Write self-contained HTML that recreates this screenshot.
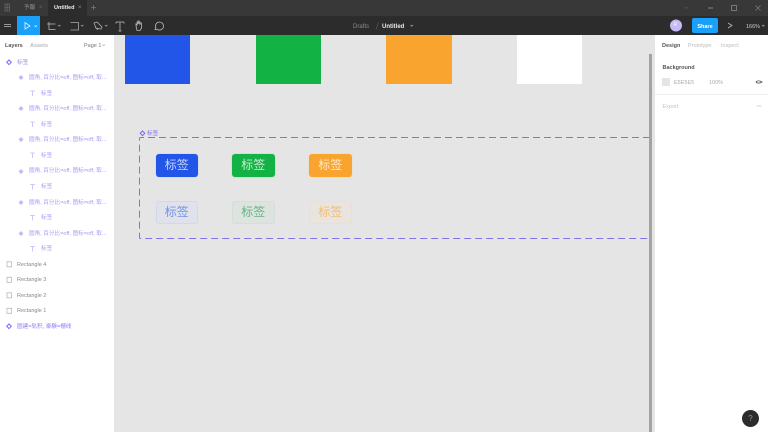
<!DOCTYPE html>
<html><head><meta charset="utf-8"><style>
html,body{margin:0;padding:0}
body{width:768px;height:432px;overflow:hidden;position:relative;background:#e5e5e5;font-family:"Liberation Sans","Noto Sans CJK SC",sans-serif}
#w{position:absolute;left:0;top:0;width:768px;height:432px;overflow:hidden;filter:blur(.3px)}
.a{position:absolute;white-space:nowrap}
.t{font-size:5.5px;line-height:8px}
.l{font-size:5.6px;line-height:8px;color:#a99cf5}
.tag{position:absolute;width:42.500px;height:23px;border-radius:3px;font-size:12px;line-height:23px;text-align:center;box-sizing:border-box}
svg{position:absolute;overflow:visible}
</style></head><body><div id="w">
<div class="a" style="left:0;top:0;width:768px;height:16px;background:#383838"></div>
<div class="a" style="left:48px;top:0;width:39px;height:16px;background:#2c2c2c"></div>
<div class="a" style="left:0;top:16px;width:768px;height:19px;background:#2c2c2c"></div>
<svg style="left:0;top:0" width="768" height="35" fill="none" stroke-width=".8">
<g stroke="#666"><rect x="5" y="4" width="4.500" height="7"/><path d="M7.200 4v7M5 7.500h4.500"/></g>
<path d="M39.500 5.500l2.500 2.500M42 5.500l-2.500 2.500" stroke="#555"/><path d="M78.500 5.500l2.500 2.500M81 5.500l-2.500 2.500" stroke="#666"/><path d="M91 7.500h5M93.500 5v5" stroke="#777"/>
<path d="M4 24.500h7M4 26.500h7" stroke="#bbb"/>
<rect x="17" y="16" width="23" height="19" fill="#18a0fb"/>
<path d="M25 22.500v6.500l5-3z" stroke="#e8f5ff"/><path d="M34.500 25.500l1.200 1.200 1.200-1.200" stroke="#e8f5ff"/>
<path d="M47 24h8.500M49 22v7.500h6.500" stroke="#bbb"/><path d="M58 25l1.200 1.200L60.500 25" stroke="#999"/>
<path d="M70.500 22.500h8v7.500h-8" stroke="#aaa"/><path d="M81 25l1.200 1.200L83.500 25" stroke="#999"/>
<path d="M94 23l3-1 5 5-1 2-5-1zM95 27l3 3" stroke="#aaa"/><path d="M105 25l1.200 1.200L107.500 25" stroke="#999"/>
<path d="M116 22h8M120 22v9M118.500 31h3M116 22v1.500M124 22v1.500" stroke="#bbb"/>
<path d="M136 26v-2l1 1v-3h1v2-3h1v3-2h1v3-2h1.500v5l-1.500 2.500h-3z" stroke="#bbb"/>
<path d="M155 29.500l1-1.500a4 4 0 1 1 1.500 1.500z" stroke="#bbb"/>
<path d="M684.500 7l1.700 1.500L688 7" stroke="#555"/>
<path d="M708 8h5" stroke="#999"/><rect x="731.500" y="5.500" width="5" height="5" stroke="#888"/><path d="M755.500 5.500l5 5M760.500 5.500l-5 5" stroke="#777"/>
<circle cx="676" cy="25.500" r="6" fill="#c7b9f5"/>
<path d="M728 23l4 2.500-4 2.500" stroke="#bbb"/>
<path d="M762 25l1.200 1.200L764.500 25" stroke="#aaa"/><path d="M410.500 25l1.200 1.200L413 25" stroke="#aaa"/>
<path d="M376 29.500l2.500-7" stroke="#555"/>
</svg>
<div class="a" style="left:24px;top:3.500px;font-size:5.500px;line-height:9px;color:#999">予報</div>
<div class="a" style="left:54px;top:3.500px;font-size:5.500px;line-height:9px;color:#eee;font-weight:bold">Untitled</div>
<div class="a" style="left:353px;top:23px;font-size:6px;line-height:9px;color:#8c8c8c">Drafts</div>
<div class="a" style="left:382px;top:23px;font-size:6px;line-height:9px;color:#e8e8e8;font-weight:bold">Untitled</div>
<div class="a" style="left:673.500px;top:22px;font-size:5px;line-height:7px;color:#fff">R</div>
<div class="a" style="left:692px;top:18px;width:26px;height:15px;background:#18a0fb;border-radius:2px"></div>
<div class="a" style="left:692px;top:21.500px;width:26px;font-size:5.500px;line-height:11px;text-align:center;color:#fff;font-weight:bold">Share</div>
<div class="a" style="left:746px;top:22.500px;font-size:5.500px;line-height:8px;color:#ccc">166%</div>

<div class="a" style="left:0;top:35px;width:114px;height:397px;background:#fff"></div>
<div class="a" style="left:655px;top:35px;width:113px;height:397px;background:#fff"></div>
<div class="a" style="left:655px;top:94px;width:113px;height:1px;background:#eee"></div>
<div class="a t" style="left:5px;top:41.500px;color:#555;font-weight:bold">Layers</div>
<div class="a t" style="left:30px;top:41.500px;color:#bbb;font-weight:bold">Assets</div>
<div class="a t" style="left:84px;top:41.500px;color:#777">Page 1</div>
<svg style="left:0;top:0" width="115" height="340" fill="none">
<path d="M102.500 44.500l1.200 1.200 1.200-1.200" stroke="#aaa" stroke-width=".7"/>
<path d="M9 60l2.300 2.300L9 64.600l-2.300-2.300z" stroke="#7b61ff"/>
<path d="M21 75l2.500 2.500-2.500 2.500-2.500-2.500z M21 106l2.500 2.500-2.500 2.500-2.500-2.500z M21 137l2.500 2.500-2.500 2.500-2.500-2.500z M21 169l2.500 2.500-2.500 2.500-2.500-2.500z M21 200l2.500 2.500-2.500 2.500-2.500-2.500z M21 231l2.500 2.500-2.500 2.500-2.500-2.500z" fill="#c4bafa"/>
<path d="M30 91h5M32.500 91v5M30 122h5M32.500 122v5M30 153h5M32.500 153v5M30 184.500h5M32.500 184.500v5M30 215.500h5M32.500 215.500v5M30 246.500h5M32.500 246.500v5" stroke="#c4bafa" stroke-width=".8"/>
<path d="M7 261.800h4.500v5H7zM7 277.300h4.500v5H7zM7 292.800h4.500v5H7zM7 308.300h4.500v5H7z" stroke="#bbb" stroke-width=".8"/>
<path d="M9 324l2.300 2.300L9 328.600l-2.300-2.300z" stroke="#7b61ff"/>
</svg>
<div class="a l" style="left:17px;top:58.500px;color:#9a88f5">标签</div>
<div class="a l" style="left:29px;top:74px">圆角, 百分比=off, 图标=off, 取...</div>
<div class="a l" style="left:41px;top:89.500px">标签</div>
<div class="a l" style="left:29px;top:105px">圆角, 百分比=off, 图标=off, 取...</div>
<div class="a l" style="left:41px;top:120.500px">标签</div>
<div class="a l" style="left:29px;top:136px">圆角, 百分比=off, 图标=off, 取...</div>
<div class="a l" style="left:41px;top:151.500px">标签</div>
<div class="a l" style="left:29px;top:167px">圆角, 百分比=off, 图标=off, 取...</div>
<div class="a l" style="left:41px;top:182.500px">标签</div>
<div class="a l" style="left:29px;top:198.500px">圆角, 百分比=off, 图标=off, 取...</div>
<div class="a l" style="left:41px;top:213.500px">标签</div>
<div class="a l" style="left:29px;top:229.500px">圆角, 百分比=off, 图标=off, 取...</div>
<div class="a l" style="left:41px;top:244.500px">标签</div>
<div class="a t" style="left:17px;top:260.500px;color:#888">Rectangle 4</div>
<div class="a t" style="left:17px;top:276px;color:#888">Rectangle 3</div>
<div class="a t" style="left:17px;top:291.500px;color:#888">Rectangle 2</div>
<div class="a t" style="left:17px;top:306.500px;color:#888">Rectangle 1</div>
<div class="a l" style="left:17px;top:322.500px;color:#8f7cf6">圆建=轨积, 楽験=栅线</div>

<div class="a" style="left:125px;top:35px;width:65px;height:49px;background:#2156e8"></div>
<div class="a" style="left:256px;top:35px;width:65px;height:49px;background:#13b244"></div>
<div class="a" style="left:386px;top:35px;width:66px;height:49px;background:#f9a42e"></div>
<div class="a" style="left:517px;top:35px;width:65px;height:49px;background:#fff"></div>

<svg style="left:0;top:0" width="655" height="432" fill="none">
<path d="M650 137.500H140.500a1 1 0 0 0-1 1V237.500a1 1 0 0 0 1 1H650" stroke="#8672e8" stroke-width="1" stroke-dasharray="7 4"/>
<path d="M142.500 131l2.300 2.300-2.300 2.300-2.300-2.300z" stroke="#7b61ff" stroke-width="1"/>
</svg>
<div class="a l" style="left:147px;top:129.500px;color:#8672e8">标签</div>

<div class="tag" style="left:155.500px;top:153.500px;background:#2156e8;color:#c9d5fb;box-shadow:0 0 0 .5px #cdd3e6">标签</div>
<div class="tag" style="left:232px;top:153.500px;background:#13b244;color:#c6eed3;box-shadow:0 0 0 .5px #c9d8ce">标签</div>
<div class="tag" style="left:309px;top:153.500px;background:#f9a42e;color:#ffe9c8;box-shadow:0 0 0 .5px #e8dccb">标签</div>
<div class="tag" style="left:155.500px;top:201px;background:#dfe2ea;border:1px solid #d3d8e8;line-height:21px;color:#7393ea">标签</div>
<div class="tag" style="left:232px;top:201px;background:#dde4e0;border:1px solid #d5ded8;line-height:21px;color:#64b482">标签</div>
<div class="tag" style="left:309px;top:201px;background:#e9e4dd;border:1px solid #e9e0d4;line-height:21px;color:#f5bd72">标签</div>

<div class="a" style="left:649px;top:54px;width:3px;height:378px;background:#a3a3a3"></div>

<div class="a t" style="left:662px;top:42px;color:#555;font-weight:bold">Design</div>
<div class="a t" style="left:688px;top:42px;color:#bbb">Prototype</div>
<div class="a t" style="left:721px;top:42px;color:#bbb">Inspect</div>
<div class="a t" style="left:662.500px;top:64px;color:#555;font-weight:bold">Background</div>
<div class="a" style="left:662px;top:78px;width:8px;height:8px;background:#e5e5e5"></div>
<div class="a t" style="left:674px;top:79px;color:#aaa">E5E5E5</div>
<div class="a t" style="left:709px;top:79px;color:#aaa">100%</div>
<svg style="left:0;top:0" width="768" height="432" fill="none">
<path d="M756 82c1-1.500 4-1.500 6 0-2 1.500-5 1.500-6 0z" stroke="#555" stroke-width=".8"/>
<path d="M756.500 106h5" stroke="#ccc" stroke-width=".8"/>
</svg>
<div class="a t" style="left:662.500px;top:102.500px;color:#c4c4c4">Export</div>
<div class="a" style="left:742px;top:410px;width:17px;height:17px;border-radius:50%;background:#2c2c2c;color:#999;font-size:8px;line-height:17px;text-align:center">?</div>
</div></body></html>
